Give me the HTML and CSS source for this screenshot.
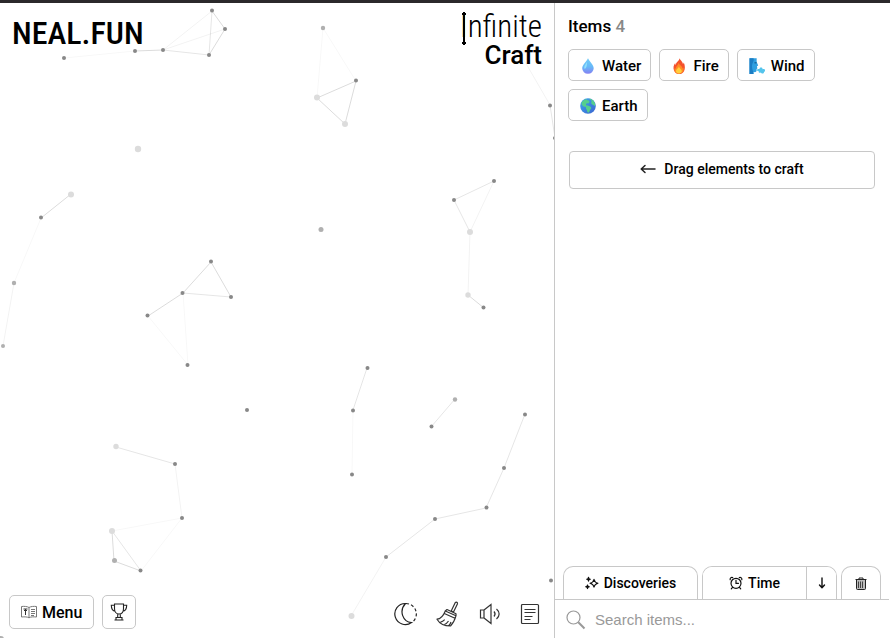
FILE: index.html
```html
<!DOCTYPE html>
<html lang="en">
<head>
<meta charset="utf-8">
<meta name="viewport" content="width=device-width, initial-scale=1">
<title>Infinite Craft</title>
<link rel="stylesheet" href="styles.css">
</head>
<body>
<div class="topbar"></div>
<div class="app">
  <main class="board">
    <svg class="particles" width="554" height="635" viewBox="0 3 554 635" aria-hidden="true">
      <g class="links">
        <path class="faintest" d="M64 58L135 51M323 28L317 98M183 293L188 365M182 518L112 531M41 218L14 283M353 410L352 474M148 316L188 365M182 518L141 571M323 28L356 81"/>
        <path class="faint" d="M163 50L212 11M163 50L225 29M14 283L3 346M470 232L468 295M494 181L470 232M386 557L351 616M175 464L182 518M524 60L550 105"/>
        <path class="soft" d="M212 11L209 55M163 50L209 55M183 293L231 297M454 200L494 181M454 200L470 232M116 447L175 464M112 531L141 571M550 105L555 138M525 414L504 468M504 468L486 508M486 508L435 519M435 519L386 557M367 368L353 410M431 427L455 399"/>
        <path class="clear" d="M135 51L163 50M212 11L225 29L209 55M317 98L356 81L345 124L317 98M148 316L183 293L211 262L231 297M41 218L71 194M468 295L484 308M112 531L114 561L141 571"/>
      </g>
      <g class="dots">
        <circle cx="163" cy="50" r="2"/><circle cx="135" cy="51" r="2"/><circle cx="212" cy="10.500" r="2"/><circle cx="225" cy="29" r="2"/><circle cx="209" cy="55" r="2"/><circle cx="64" cy="58" r="2"/>
        <circle cx="356" cy="80.500" r="2"/><circle cx="550" cy="105.500" r="2"/><circle cx="555" cy="138" r="2"/><circle cx="494" cy="181" r="2"/><circle cx="454" cy="200" r="2"/><circle cx="41" cy="217.500" r="2"/>
        <circle cx="211" cy="261.500" r="2"/><circle cx="182.500" cy="293" r="2"/><circle cx="231" cy="297" r="2"/><circle cx="147.500" cy="315.500" r="2"/><circle cx="187.500" cy="365" r="2"/><circle cx="483.500" cy="307.500" r="2"/>
        <circle cx="367.500" cy="368" r="2"/><circle cx="353" cy="410.500" r="2"/><circle cx="352" cy="474.500" r="2"/><circle cx="247" cy="410" r="2"/><circle cx="431.500" cy="426.500" r="2"/><circle cx="525" cy="414.500" r="2"/>
        <circle cx="504" cy="468" r="2"/><circle cx="486.500" cy="507.500" r="2"/><circle cx="435" cy="519" r="2"/><circle cx="386" cy="557" r="2"/><circle cx="175" cy="464" r="2"/><circle cx="182" cy="518" r="2"/><circle cx="140.500" cy="570.500" r="2"/><circle cx="551" cy="580.500" r="2"/>
      </g>
      <g class="dots mid">
        <circle cx="323" cy="28" r="2.200"/><circle cx="321" cy="229.500" r="2.500"/><circle cx="14" cy="283" r="2.200"/><circle cx="3" cy="346" r="2"/><circle cx="455" cy="399.500" r="2.200"/><circle cx="114.500" cy="560.500" r="2.500"/><circle cx="1" cy="639" r="3"/>
      </g>
      <g class="dots pale">
        <circle cx="138" cy="149" r="3.200"/><circle cx="317" cy="97.500" r="3"/><circle cx="345" cy="124" r="3"/><circle cx="71" cy="194.500" r="3"/><circle cx="470" cy="232" r="3"/><circle cx="468" cy="295" r="2.700"/><circle cx="116" cy="446.500" r="2.700"/><circle cx="112" cy="531" r="3"/><circle cx="351.500" cy="616" r="3"/>
      </g>
    </svg>
    <header class="board-head">
      <a class="brand" href="#">NEAL.FUN</a>
      <h1 class="title"><span class="title-thin"><span class="stem">I</span>nfinite</span><span class="title-bold">Craft</span></h1>
    </header>
    <footer class="board-foot">
      <div class="group">
        <button class="box menu" type="button">
          <svg width="16" height="14" viewBox="0 0 16 14" fill="none" stroke="#777" aria-hidden="true"><path d="M8 2.500C6 1.300 3 1.200.500 1.500v10.500c3-.300 6-.200 7.500.800 1.500-1 4.500-1.100 7.500-.800V1.500C13 1.200 10 1.300 8 2.500zM8 2.500v10.300"/><path d="M10 4.500h4M10 6.500h4M10 8.500h4M10 10.500h3"/><path stroke="#333" d="M2.500 4h4M4.500 4v6M3 5.500h3"/></svg>
          Menu
        </button>
        <button class="box trophy" type="button" aria-label="Achievements">
          <svg width="18" height="18" viewBox="0 0 18 18" fill="none" stroke="#222" stroke-width="1.100" aria-hidden="true"><path d="M4.500 1h9v4.500c0 3.200-1.700 5.500-4.500 5.500S4.500 8.700 4.500 5.500zM4.500 2.300H1.300C1.300 6 2.800 8 5.500 8.500M13.500 2.300h3.200C16.700 6 15.200 8 12.500 8.500M7.700 11v3.500M10.300 11v3.500M6 14.500h6v2.500H6zM4.500 17h9"/></svg>
        </button>
      </div>
      <div class="group tools">
        <button class="tool" type="button" aria-label="Dark mode">
          <svg width="24" height="24" viewBox="0 0 24 24" fill="none" stroke="#222" stroke-width="1.200" aria-hidden="true"><path d="M12.500 1.500A10.500 10.500 0 1 0 18.500 20.500C10 20 5.500 9 12.500 1.500z"/><path stroke-dasharray="3 2.200" d="M13 1.500A10.500 10.500 0 0 1 19 20.500"/></svg>
        </button>
        <button class="tool" type="button" aria-label="Clear board">
          <svg width="24" height="26" viewBox="0 0 24 26" fill="none" stroke="#333" stroke-width="1.200" stroke-linejoin="round" aria-hidden="true"><path d="M19.300 1.500c1-.700 2.400 0 2.200 1.200L17.500 11l-2.300-1zM11 8.500l9 4.200v2L9.300 10zM9.300 10C7.500 14.500 4 18 1 18.200 3.500 22.500 8 25 14.500 25c3-3 4.500-6.500 5.500-10.300M8.300 12.500l10.700 4.700M4.500 21.200c2-.500 3-1.300 4.200-2.500M8.500 23.500c2-.800 3-2 4-3.500M12.500 25c1.200-1.300 2-2.500 2.500-4"/></svg>
        </button>
        <button class="tool" type="button" aria-label="Sound">
          <svg width="22" height="24" viewBox="0 0 22 24" fill="none" stroke="#333" stroke-width="1.200" aria-hidden="true"><path d="M1.500 8H5v8H1.500zM5 8l7-5.500v19L5 16M15 9.500c1.300 1.500 1.300 3.500 0 5M17.500 7c3.500 3 3.500 7 0 10"/></svg>
        </button>
        <button class="tool" type="button" aria-label="Patch notes">
          <svg width="20" height="22" viewBox="0 0 20 22" fill="none" stroke="#333" stroke-width="1.200" aria-hidden="true"><rect x="1.500" y="1.500" width="17" height="19" rx="1"/><path d="M4.500 6.500h11M4.500 9.500h11M4.500 13.500h8M4.500 16.500h6"/></svg>
        </button>
      </div>
    </footer>
  </main>
  <aside class="sidebar">
    <section class="inventory">
      <h2 class="heading">Items <span class="count">4</span></h2>
      <div class="items">
        <button class="item" type="button">
          <svg width="16" height="16" viewBox="0 0 16 16" aria-hidden="true"><defs><linearGradient id="water" x2="0" y2="1"><stop stop-color="#72cdf7"/><stop offset=".55" stop-color="#67b9f8"/><stop offset="1" stop-color="#8580f2"/></linearGradient></defs><path fill="url(#water)" d="M8 .300C6.500 3.500 2.200 7 2.200 10.300a5.700 5.400 0 0 0 11.500 0C13.700 7 9.500 3.500 8 .300z"/><path fill="#8fe0fb" d="M7 4C5.500 6.500 4 8 4.200 10.500c2 1 3-3 2.800-6.500z"/></svg>
          Water
        </button>
        <button class="item" type="button">
          <svg width="16" height="16" viewBox="0 0 16 16" aria-hidden="true"><path fill="#f4512c" d="M8.500.300C9 2.200 11.500 3.200 12 6c.500-.300.700-1 .800-1.500 1.300 3 1.500 6.500.200 8.700C11.800 15.200 10.200 16 8 16s-4-1-5-3.500C2 10 2.500 7 4.200 5c0 1 .200 1.500.600 2C4.800 4 8.500 3 8.500.300z"/><path fill="#ff8a25" d="M7.500 4.500c.500 2.500 4 3.500 4 6 .500-.300.700-.700.800-1.200 1.200 3-.300 6.400-4.300 6.400s-5.300-3-4.100-6c.300.700.600 1 1 1.200C4.500 8.500 7.500 7 7.500 4.500z"/><path fill="#ffcf3c" d="M8 8.500c0 2 2.800 2.500 2.800 4.500 0 1.500-1.200 2.500-2.800 2.500S5 14.500 5 13c0-2 2.500-2.500 3-4.500z"/></svg>
          Fire
        </button>
        <button class="item" type="button">
          <svg width="16" height="16" viewBox="0 0 16 16" aria-hidden="true"><path fill="#2f9fe0" d="M.500.300h7.200c0 2-.200 3 .200 4.200l1.300 3-1.300.700.500 2.300-.800.500C8 14 6.500 14.500 4.500 14v2h-4z"/><path fill="#1b7dc4" d="M.500.300h4C5.500 3 3 5 3 8.500S4.500 13 4.500 16h-4z"/><path fill="#155c90" d="M5.500 4.200h2v1.200h-2z"/><path fill="#54c4ec" d="M8.500 11h2c0-2 3.300-2 3 .300 2.500-1 3.500 1.700 1.500 2.700 0 2-2.700 2-3 .500-1.700.800-2.500 0-2.200-1.200l-1.800-.600z"/></svg>
          Wind
        </button>
        <button class="item" type="button">
          <svg width="16" height="16" viewBox="0 0 16 16" aria-hidden="true"><defs><linearGradient id="sea" x2="1" y2="1"><stop stop-color="#3da9ee"/><stop offset="1" stop-color="#3b63cf"/></linearGradient></defs><circle cx="8" cy="8" r="7.800" fill="url(#sea)"/><path fill="#55cf8c" d="M5 1.500C2.500 2.500 1.500 4.500 1.500 6c1 2 2.300 2.800 4 2.800 1 .800-.200 2 1.300 3 .300 1.500.500 2.500 1.500 3 1.500-1 1.200-2 2.200-3.500 1.300-1 .800-2.200-.500-2.700C8.500 7.500 7.500 7.300 6.500 7.500 5 6 7 5 8.200 5.500 9.500 4.500 10 3.500 9 2.700 8 2 7 2.500 6.500 1.300zM9.500.500c-.500 1 1 1.500 2 2 .500 1.500-1 2 0 3.200 1 1.200 2.500 1 3.500 2.500.700-2.700-.500-6-5.500-7.700z"/></svg>
          Earth
        </button>
      </div>
      <p class="hint">
        <svg width="16" height="12" viewBox="0 0 16 12" fill="none" stroke="#222" stroke-width="1.500" stroke-linecap="round" stroke-linejoin="round" aria-hidden="true"><path d="M15 6H1.500M5 2.500L1.200 6 5 9.500"/></svg>
        Drag elements to craft
      </p>
    </section>
    <div class="controls">
      <div class="tabs">
        <button class="tab wide" type="button">
          <svg width="14" height="14" viewBox="0 0 14 14" fill="none" stroke="#111" stroke-width="1.100" stroke-linejoin="round" aria-hidden="true"><path d="M9 3.300c.500 2.500 1.300 3.300 4 3.900-2.700.600-3.500 1.400-4 4-.500-2.600-1.300-3.400-4-4 2.700-.600 3.500-1.400 4-3.900z"/><path fill="#111" d="M3.500 1.200l.500 1.500 1.300.500L4 3.700l-.500 1.500L3 3.700l-1.300-.500L3 2.700zM2.500 9l.500 1.300 1.300.500-1.300.500-.500 1.300-.500-1.300-1.300-.500 1.300-.500z"/></svg>
          Discoveries
        </button>
        <div class="split">
          <button class="part wide" type="button">
            <svg width="14" height="14" viewBox="0 0 14 14" fill="none" stroke="#111" stroke-width="1.200" stroke-linecap="round" aria-hidden="true"><circle cx="7" cy="7.300" r="5"/><path d="M7 4.300v3h2.500M1.200 3.800c-.500-1.500 1-2.800 2.500-2.200M12.800 3.800c.500-1.500-1-2.800-2.500-2.200M3.500 11.300l-1.200 1.500M10.500 11.300l1.200 1.500"/></svg>
            Time
          </button>
          <button class="part arrow" type="button" aria-label="Sort descending">
            <svg width="8" height="12" viewBox="0 0 8 12" fill="none" stroke="#111" stroke-width="1.400" stroke-linecap="round" stroke-linejoin="round" aria-hidden="true"><path d="M4 1v9.500M1.500 8L4 10.800 6.500 8"/></svg>
          </button>
        </div>
        <button class="tab trash" type="button" aria-label="Delete items">
          <svg width="12" height="13" viewBox="0 0 12 13" fill="none" stroke="#222" aria-hidden="true"><path fill="#bbb" d="M1.500 3v8.500q0 1 1 1h7q1 0 1-1V3"/><path d="M.500 2.500h11M4 2.500v-1.500h4v1.500"/><path d="M3.500 4.500v6.500M5.500 4.500v6.500M7.500 4.500v6.500" stroke="#444"/></svg>
        </button>
      </div>
      <label class="search">
        <svg width="20" height="20" viewBox="0 0 20 20" fill="none" stroke="#999" aria-hidden="true"><circle cx="7.500" cy="7.500" r="6.500" stroke-width="1.200"/><path stroke-width="2" d="M12.300 12.300L18.500 18.500"/></svg>
        <input type="text" placeholder="Search items..." aria-label="Search items">
      </label>
    </div>
  </aside>
</div>
</body>
</html>
```

FILE: styles.css
```css
* {
  box-sizing: border-box;
}

body {
  margin: 0;
  min-height: 100vh;
  display: flex;
  flex-direction: column;
  background: #fff;
  color: #000;
  font-family: Roboto, "Liberation Sans", sans-serif;
}

button {
  margin: 0;
  padding: 0;
  border: 0;
  background: #fff;
  color: inherit;
  font: inherit;
  font-weight: 500;
  display: flex;
  align-items: center;
  justify-content: center;
}

svg {
  flex: none;
}

.topbar {
  height: 3px;
  background: #2b292b;
}

.app {
  flex: 1;
  display: flex;
}

/* Board */
.board {
  position: relative;
  flex: 1;
  min-width: 0;
  overflow: hidden;
  display: flex;
  flex-direction: column;
  justify-content: space-between;
}

.particles {
  position: absolute;
  top: 0;
  left: 0;
}

.links {
  fill: none;
  stroke: #000;
}

.faintest {
  stroke-opacity: 0.03;
}

.faint {
  stroke-opacity: 0.05;
}

.soft {
  stroke-opacity: 0.1;
}

.clear {
  stroke-opacity: 0.14;
}

.dots {
  fill: #888;
}

.mid {
  fill: #b0b0b0;
}

.pale {
  fill: #dcdcdc;
}

.board-head,
.board-foot {
  position: relative;
  display: flex;
  justify-content: space-between;
}

.board-head {
  padding: 8px 12px 0;
}

.brand {
  color: #000;
  text-decoration: none;
  font-family: "Roboto Condensed", "Liberation Sans Narrow", Roboto, sans-serif;
  font-size: 32px;
  line-height: 44px;
  font-weight: 500;
}

.title {
  margin: 0;
  display: flex;
  flex-direction: column;
  align-items: flex-end;
}

.title-thin {
  font-family: "Roboto Condensed", Roboto, sans-serif;
  font-size: 31px;
  line-height: 32px;
  font-weight: 300;
}

.stem {
  position: relative;
}

.stem::before {
  content: "";
  position: absolute;
  top: 4px;
  bottom: 0;
  left: 50%;
  width: 4px;
  margin-left: -2px;
  background:
    radial-gradient(circle at 50% 2px, #000 2px, transparent 2px),
    radial-gradient(circle at 50% calc(100% - 2px), #000 2px, transparent 2px),
    linear-gradient(#000, #000) center / 2px 100% no-repeat;
}

.title-bold {
  font-size: 26px;
  line-height: 24px;
  font-weight: 500;
}

.board-foot {
  padding: 0 14px 9px 9px;
  align-items: flex-end;
}

.group {
  display: flex;
  align-items: center;
  gap: 8px;
}

.box {
  height: 34px;
  border: 1px solid #c8c8c8;
  border-radius: 5px;
}

.menu {
  padding: 0 11px;
  gap: 5px;
  font-size: 16px;
}

.trophy {
  width: 34px;
}

.tools {
  gap: 19px;
  height: 30px;
}

.tool {
  background: none;
}

/* Sidebar */
.sidebar {
  flex: 0 0 336px;
  border-left: 1px solid #c8c8c8;
  padding-right: 1px;
  display: flex;
  flex-direction: column;
  justify-content: space-between;
}

.inventory {
  padding: 13px 13px 0;
}

.heading {
  margin: 0 0 13px;
  font-size: 17px;
  line-height: 20px;
  font-weight: 500;
}

.count {
  color: #888;
}

.items {
  display: flex;
  flex-wrap: wrap;
  gap: 8px;
  padding-right: 40px;
}

.item {
  height: 32px;
  padding: 1px 9px 0 11px;
  gap: 6px;
  border: 1px solid #c8c8c8;
  border-radius: 5px;
  font-size: 15px;
}

.hint {
  height: 38px;
  margin: 30px 1px 0;
  padding-bottom: 2px;
  display: flex;
  align-items: center;
  justify-content: center;
  gap: 8px;
  border: 1px solid #c8c8c8;
  border-radius: 4px;
  font-size: 14px;
  font-weight: 500;
}

.tabs {
  display: flex;
  gap: 4px;
  padding: 0 8px;
  border-bottom: 1px solid #c8c8c8;
  font-size: 14px;
}

.tab,
.split {
  height: 33px;
  border: 1px solid #c8c8c8;
  border-bottom: 0;
  border-radius: 10px 10px 0 0;
}

.split {
  flex: 1;
  display: flex;
  overflow: hidden;
}

.wide {
  flex: 1;
  gap: 5px;
}

.arrow {
  width: 30px;
  border-left: 1px solid #c8c8c8;
}

.trash {
  width: 40px;
}

.search {
  display: flex;
  align-items: center;
  gap: 9px;
  height: 38px;
  padding: 1px 11px 0;
}

.search input {
  flex: 1;
  min-width: 0;
  padding: 0;
  border: 0;
  outline: 0;
  background: none;
  font-family: "Liberation Sans", sans-serif;
  font-size: 15px;
}

.search input::placeholder {
  color: #999;
}
```
